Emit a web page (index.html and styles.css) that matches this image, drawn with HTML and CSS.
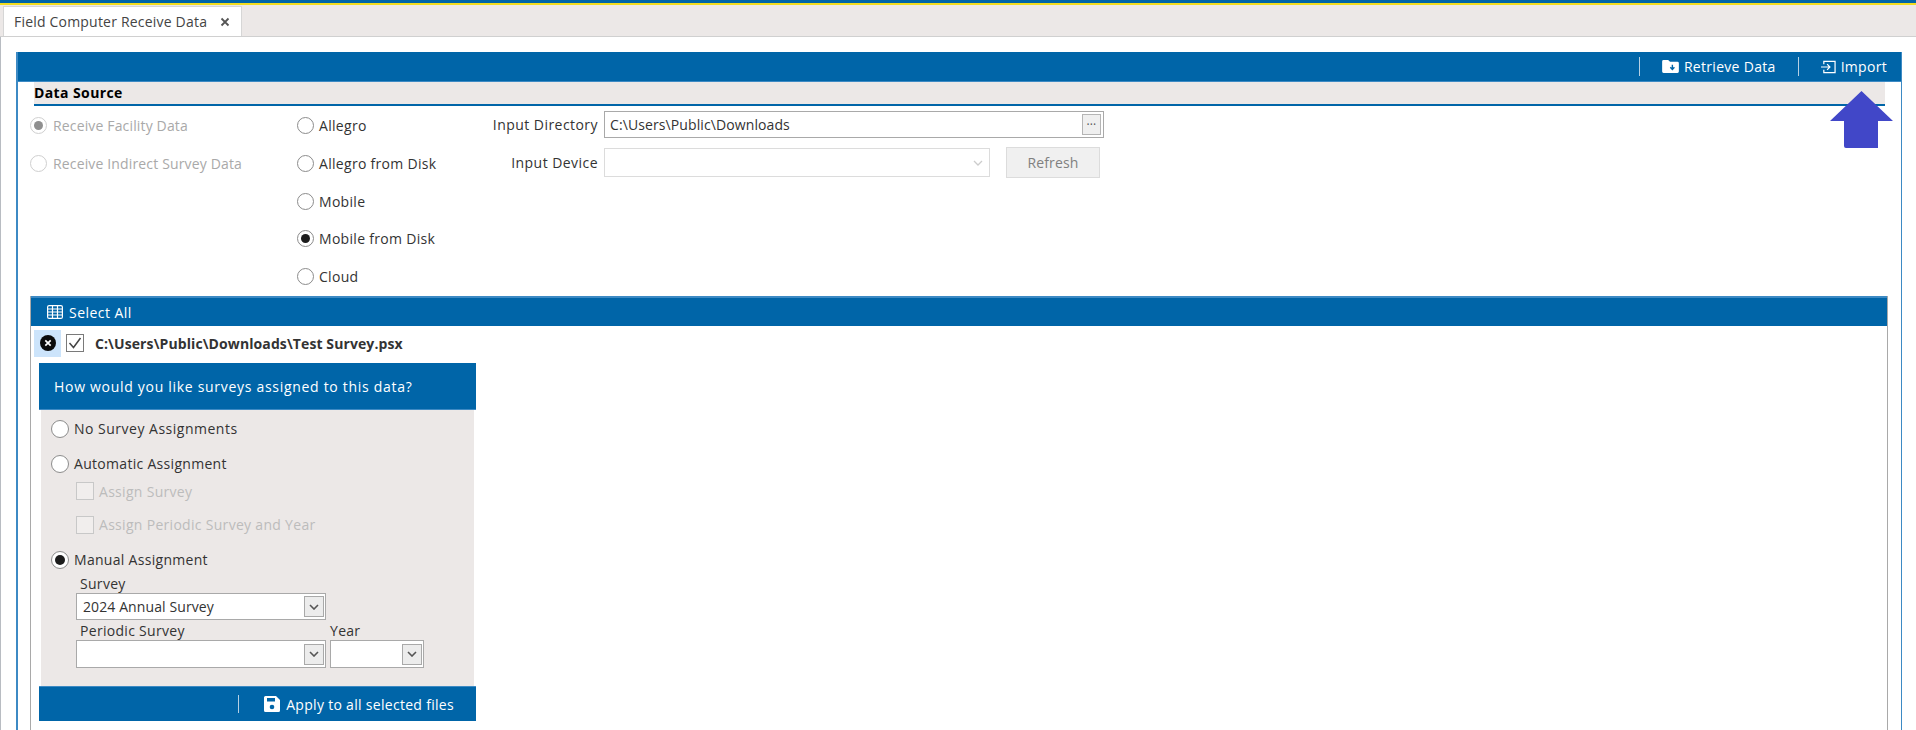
FILE: index.html
```html
<!DOCTYPE html>
<html lang="en">

<head>
    <meta charset="UTF-8">
    <meta name="viewport" content="width=device-width, initial-scale=1.0">
    <title>Field Computer Receive Data</title>
    <link rel="stylesheet" href="styles.css">
</head>

<body>
    <div class="top-strip"></div>
    <div class="tab-bar">
        <div class="tab">
            <span>Field Computer Receive Data</span>
            <svg class="tab-close" viewBox="0 0 10 10" width="10" height="10"><path d="M1.5 1.5l7 7M8.5 1.5l-7 7" stroke="#555" stroke-width="1.8" fill="none"/></svg>
        </div>
    </div>

    <div class="page">
        <div class="panel">
            <div class="toolbar">
                <span class="tool-sep"></span>
                <span class="tool-btn">
                    <svg viewBox="0 0 18 14" width="17" height="13"><path d="M1.5 0h5l2 2h8a1.5 1.5 0 0 1 1.5 1.5v9a1.5 1.5 0 0 1-1.5 1.5h-15A1.5 1.5 0 0 1 0 12.500v-11A1.500 1.500 0 0 1 1.500 0z" fill="#fff"/><path d="M11 5v4.500M8.800 7.800l2.200 2.400 2.200-2.400" stroke="#0065a8" stroke-width="1.500" fill="none"/></svg>
                    Retrieve Data
                </span>
                <span class="tool-sep"></span>
                <span class="tool-btn import-btn">
                    <svg viewBox="0 0 16 14" width="15" height="14"><path d="M3 4V1h12v12H3v-3M0 7h9M6.500 4l3 3-3 3" stroke="#fff" stroke-width="1.300" fill="none"/></svg>
                    Import
                </span>
            </div>

            <div class="section-title">Data Source</div>

            <div class="source-row">
                <div class="source-col col-type">
                    <label class="opt disabled"><span class="radio on"></span>Receive Facility Data</label>
                    <label class="opt disabled"><span class="radio"></span>Receive Indirect Survey Data</label>
                </div>
                <div class="source-col col-kind">
                    <label class="opt"><span class="radio"></span>Allegro</label>
                    <label class="opt"><span class="radio"></span>Allegro from Disk</label>
                    <label class="opt"><span class="radio"></span>Mobile</label>
                    <label class="opt"><span class="radio on"></span>Mobile from Disk</label>
                    <label class="opt"><span class="radio"></span>Cloud</label>
                </div>
                <div class="col-input">
                    <div class="input-row">
                        <span class="input-label">Input Directory</span>
                        <div class="dir-box">
                            <span>C:\Users\Public\Downloads</span>
                            <span class="dots">···</span>
                        </div>
                    </div>
                    <div class="input-row device-row">
                        <span class="input-label">Input Device</span>
                        <div class="device-box">
                            <svg viewBox="0 0 10 6" width="10" height="6"><path d="M1 1l4 4 4-4" stroke="#ccc" stroke-width="1.300" fill="none"/></svg>
                        </div>
                        <span class="refresh-btn">Refresh</span>
                    </div>
                </div>
            </div>

            <div class="files-panel">
                <div class="files-head">
                    <svg viewBox="0 0 16 14" width="16" height="14"><rect x=".6" y=".6" width="14.800" height="12.800" rx="1.500" fill="none" stroke="#fff" stroke-width="1.200"/><path d="M.6 4h14.800M.6 7h14.800M.6 10h14.800M5.500 1v12M10.500 1v12" stroke="#fff" stroke-width="1.200"/></svg>
                    Select All
                </div>
                <div class="file-row">
                    <span class="remove-btn">
                        <svg viewBox="0 0 16 16" width="16" height="16"><circle cx="8" cy="8" r="8" fill="#0b0b0b"/><path d="M5.300 5.300l5.400 5.400M10.700 5.300l-5.400 5.400" stroke="#fff" stroke-width="1.700"/></svg>
                    </span>
                    <span class="file-check">
                        <svg viewBox="0 0 14 12" width="14" height="12"><path d="M1.500 6l4 4.500L12.500 1" stroke="#444" stroke-width="1.500" fill="none"/></svg>
                    </span>
                    <span class="file-name">C:\Users\Public\Downloads\Test Survey.psx</span>
                </div>

                <div class="assign-card">
                    <div class="assign-head">How would you like surveys assigned to this data?</div>
                    <div class="assign-body">
                        <label class="assign-opt"><span class="radio"></span>No Survey Assignments</label>
                        <label class="assign-opt opt-auto"><span class="radio"></span>Automatic Assignment</label>
                        <label class="assign-sub sub-survey"><span class="check"></span>Assign Survey</label>
                        <label class="assign-sub sub-periodic"><span class="check"></span>Assign Periodic Survey and Year</label>
                        <label class="assign-opt opt-manual"><span class="radio on"></span>Manual Assignment</label>
                        <div class="field-label survey-label">Survey</div>
                        <div class="select wide">
                            <span class="select-value">2024 Annual Survey</span>
                            <span class="select-arrow"><svg viewBox="0 0 10 6" width="10" height="6"><path d="M1 1l4 4 4-4" stroke="#555" stroke-width="1.600" fill="none"/></svg></span>
                        </div>
                        <div class="field-row labels">
                            <div class="field-label wide-label">Periodic Survey</div>
                            <div class="field-label year-label">Year</div>
                        </div>
                        <div class="field-row">
                            <div class="select wide">
                                <span class="select-arrow"><svg viewBox="0 0 10 6" width="10" height="6"><path d="M1 1l4 4 4-4" stroke="#555" stroke-width="1.600" fill="none"/></svg></span>
                            </div>
                            <div class="select narrow">
                                <span class="select-arrow"><svg viewBox="0 0 10 6" width="10" height="6"><path d="M1 1l4 4 4-4" stroke="#555" stroke-width="1.600" fill="none"/></svg></span>
                            </div>
                        </div>
                    </div>
                    <div class="assign-foot">
                        <span class="foot-sep"></span>
                        <svg viewBox="0 0 16 16" width="16" height="16"><path d="M1.500 0H12l4 4v10.500a1.500 1.500 0 0 1-1.500 1.500h-13A1.500 1.500 0 0 1 0 14.500v-13A1.500 1.500 0 0 1 1.500 0z" fill="#fff"/><rect x="3" y="2" width="8" height="3.500" fill="#0065a8"/><circle cx="8" cy="11" r="2.300" fill="#0065a8"/></svg>
                        Apply to all selected files
                    </div>
                </div>
            </div>
        </div>
    </div>

    <svg class="callout-arrow" viewBox="0 0 63 57" width="63" height="57"><path d="M31.500 0L63 30H48V57H16a2 2 0 0 1-2-2V30H0z" fill="#4147c8"/></svg>
</body>

</html>
```

FILE: styles.css
```css
* {
    box-sizing: border-box;
}

html,
body {
    height: 730px;
    overflow: hidden;
}

body {
    margin: 0;
    background-color: #fff;
    color: #333;
    font-family: "Open Sans", "Noto Sans", Arial, sans-serif;
    font-size: 14px;
    letter-spacing: 0.3px;
}

.top-strip {
    height: 5px;
    background-color: #0065a8;
    border-bottom: 2px solid #f3dc1e;
}

.tab-bar {
    height: 32px;
    padding: 1px 0 0 3px;
    background-color: #ece8e7;
    border-bottom: 1px solid #d0d0d0;
}

.tab {
    display: flex;
    align-items: center;
    width: 239px;
    height: 30px;
    padding-left: 10px;
    background-color: #fff;
    border: 1px solid #d6d6d6;
    border-bottom: none;
    color: #444;
    letter-spacing: 0.2px;
}

.tab-close {
    margin-left: 13px;
}

.page {
    height: 693px;
    padding: 15px 14px 0 15px;
    border-left: 1px solid #b8bcc2;
}

.panel {
    height: 100%;
    border: 1px solid #3d8ac4;
    border-bottom: none;
    border-left-width: 2px;
}

.toolbar {
    display: flex;
    align-items: center;
    justify-content: flex-end;
    height: 30px;
    margin-top: -1px;
    padding-right: 14px;
    background-color: #0065a8;
    border-bottom: 1px solid #3d8ac4;
    color: #fff;
}

.tool-sep {
    width: 1px;
    height: 19px;
    margin-left: 22px;
    background-color: #b5d0e4;
}

.tool-btn {
    display: flex;
    align-items: center;
    gap: 5px;
    margin-left: 22px;
}

.section-title {
    height: 24px;
    margin: 0 16px;
    background-color: #ece8e7;
    border-bottom: 2px solid #0065a8;
    color: #000;
    font-weight: 700;
    letter-spacing: 0.4px;
    line-height: 22px;
}

.source-row {
    display: flex;
    height: 190px;
}

.source-col {
    display: flex;
    flex-direction: column;
    padding-top: 1px;
}

.col-type {
    width: 279px;
    padding-left: 12px;
}

.col-kind {
    width: 164px;
}

.opt {
    display: flex;
    align-items: center;
    height: 37.700px;
    gap: 5px;
    color: #333;
}

.opt.disabled {
    gap: 6px;
    color: #a9a9a9;
    letter-spacing: 0.15px;
}

.radio {
    position: relative;
    flex: none;
    width: 17px;
    height: 17px;
    background-color: #fff;
    border: 1px solid #8c8c8c;
    border-radius: 50%;
}

.radio.on::after {
    content: "";
    position: absolute;
    top: 3px;
    left: 3px;
    width: 9px;
    height: 9px;
    background-color: #1c1c1c;
    border-radius: 50%;
}

.disabled .radio {
    border-color: #cfcfcf;
}

.disabled .radio.on::after {
    background-color: #8f8f8f;
}

.col-input {
    padding-top: 5px;
}

.input-row {
    display: flex;
    align-items: center;
    height: 27px;
}

.device-row {
    height: 31px;
    margin-top: 9px;
}

.input-label {
    width: 137px;
    margin-right: 6px;
    letter-spacing: 0.45px;
    text-align: right;
}

.dir-box {
    display: flex;
    align-items: center;
    justify-content: space-between;
    width: 500px;
    height: 27px;
    padding: 2px 2px 2px 5px;
    border: 1px solid #a9a9a9;
    letter-spacing: 0.1px;
}

.dots {
    width: 19px;
    height: 21px;
    background-color: #efefef;
    border: 1px solid #b5b5b5;
    color: #555;
    font-size: 12px;
    line-height: 19px;
    text-align: center;
}

.device-box {
    display: flex;
    align-items: center;
    justify-content: flex-end;
    width: 386px;
    height: 29px;
    padding-right: 6px;
    border: 1px solid #dcdcdc;
}

.refresh-btn {
    width: 94px;
    height: 31px;
    margin-left: 16px;
    background-color: #f0f0f0;
    border: 1px solid #dcdcdc;
    color: #808080;
    letter-spacing: 0.1px;
    line-height: 29px;
    text-align: center;
}

.files-panel {
    position: relative;
    height: 440px;
    margin: 0 13px 0 12px;
    border-left: 1px solid #a9a9a9;
    border-right: 1px solid #a9a9a9;
}

.files-head {
    display: flex;
    align-items: center;
    gap: 6px;
    height: 30px;
    padding-left: 16px;
    background-color: #0065a8;
    border-top: 2px solid #3d8ac4;
    color: #fff;
    letter-spacing: 0.45px;
}

.file-row {
    display: flex;
    align-items: center;
    height: 31px;
    padding: 3px 0 0 3px;
}

.remove-btn {
    display: flex;
    align-items: center;
    justify-content: center;
    width: 27px;
    height: 27px;
    background-color: #cce4fb;
}

.file-check {
    display: flex;
    align-items: center;
    justify-content: center;
    width: 18px;
    height: 18px;
    margin-left: 5px;
    border: 1px solid #7a7a7a;
}

.file-name {
    margin-left: 11px;
    font-weight: 700;
    letter-spacing: 0.1px;
}

.assign-card {
    width: 437px;
    margin: 6px 0 0 8px;
}

.assign-head {
    height: 47px;
    padding-left: 15px;
    background-color: #0065a8;
    border-bottom: 1px solid #3d8ac4;
    color: #fff;
    letter-spacing: 0.7px;
    line-height: 48px;
}

.assign-body {
    height: 276px;
    margin: 0 2px;
    padding: 1px 0 0 10px;
    background-color: #ece8e7;
}

.assign-opt {
    display: flex;
    align-items: center;
    gap: 5px;
    height: 35px;
    letter-spacing: 0.5px;
}

.opt-auto,
.opt-manual {
    letter-spacing: 0.3px;
}

.assign-opt .radio {
    width: 18px;
    height: 18px;
}

.assign-opt .radio.on::after {
    width: 10px;
    height: 10px;
}

.opt-manual {
    height: 23px;
}

.assign-sub {
    display: flex;
    align-items: center;
    gap: 5px;
    margin-left: 25px;
    color: #bcbcbc;
}

.sub-survey {
    height: 20px;
}

.sub-periodic {
    height: 47px;
}

.check {
    flex: none;
    width: 18px;
    height: 18px;
    background-color: #f1eeed;
    border: 1px solid #c8c8c8;
}

.field-label {
    height: 15px;
    margin-left: 29px;
    line-height: 15px;
}

.survey-label {
    margin-top: 5px;
}

.field-row {
    display: flex;
    gap: 4px;
    margin-left: 25px;
}

.field-row .field-label {
    margin-left: 4px;
}

.field-row .year-label {
    margin-left: 0;
}

.labels {
    height: 20px;
    padding-top: 3px;
}

.wide-label {
    width: 246px;
}

.select {
    display: flex;
    align-items: center;
    justify-content: space-between;
    height: 27px;
    padding: 2px 1px 2px 6px;
    background-color: #fff;
    border: 1px solid #a9a9a9;
}

.select-value {
    letter-spacing: 0.1px;
}

.assign-body > .select {
    width: 250px;
    margin: 2px 0 0 25px;
}

.select.wide {
    width: 250px;
}

.select.narrow {
    width: 94px;
}

.field-row .select {
    height: 28px;
}

.select-arrow {
    display: flex;
    align-items: center;
    justify-content: center;
    width: 20px;
    height: 21px;
    margin-left: auto;
    background-color: #ececec;
    border: 1px solid #a9a9a9;
}

.assign-foot {
    display: flex;
    align-items: center;
    justify-content: flex-end;
    gap: 6px;
    height: 35px;
    padding-right: 22px;
    background-color: #0065a8;
    border-top: 1px solid #3d8ac4;
    color: #fff;
}

.foot-sep {
    width: 1px;
    height: 18px;
    margin-right: 19px;
    background-color: #b5d0e4;
}

.callout-arrow {
    position: absolute;
    top: 91px;
    left: 1830px;
}
```
